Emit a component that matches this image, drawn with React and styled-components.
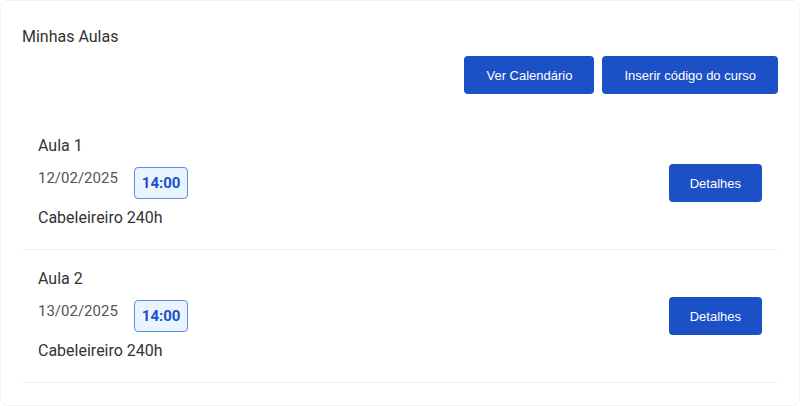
import styled, { createGlobalStyle } from 'styled-components';

const GlobalStyle = createGlobalStyle`
  html, body {
    margin: 0;
    padding: 0;
    background: #fff;
  }
  body {
    font-family: Roboto, "Liberation Sans", Arial, sans-serif;
    color: #333;
  }
`;

const Card = styled.section`
  box-sizing: border-box;
  width: 800px;
  height: 406px;
  padding: 25px 21px 0;
  background: #fff;
  border-radius: 8px;
  border: 1px solid #f3f3f3;
`;

const Title = styled.h2`
  margin: 0;
  font-size: 16px;
  font-weight: 400;
  line-height: 22px;
  color: #333;
`;

const Actions = styled.div`
  display: flex;
  justify-content: flex-end;
  gap: 8px;
  margin-top: 8px;
`;

const Button = styled.button`
  height: 38px;
  padding: 0 ${(p) => p.$pad || 22}px;
  border: none;
  border-radius: 4px;
  background: #1b50c7;
  color: #fff;
  font-family: "Liberation Sans", Arial, sans-serif;
  font-size: 13px;
  cursor: pointer;
`;

const DetailButton = styled(Button)`
  margin-top: 4px;
`;

const List = styled.ul`
  list-style: none;
  margin: 23px 0 0;
  padding: 0;
`;

const Item = styled.li`
  display: flex;
  align-items: center;
  justify-content: space-between;
  padding: 17px 16px 21px;
  border-bottom: 1px solid #eeeeee;
`;

const Info = styled.div`
  display: flex;
  flex-direction: column;
`;

const Name = styled.div`
  font-size: 16px;
  line-height: 24px;
  color: #333;
`;

const When = styled.div`
  display: flex;
  align-items: flex-start;
  gap: 16px;
  margin-top: 9px;
`;

const Date = styled.span`
  font-size: 15px;
  line-height: 22px;
  color: #555;
`;

const Time = styled.span`
  box-sizing: border-box;
  display: inline-flex;
  align-items: center;
  justify-content: center;
  height: 32px;
  padding: 0 7px;
  border: 1px solid #5b8ee6;
  border-radius: 4px;
  background: #e9f4ff;
  color: #1b50c7;
  font-size: 15px;
  font-weight: 700;
`;

const Course = styled.div`
  margin-top: 9px;
  font-size: 16px;
  line-height: 20px;
  color: #333;
`;

const aulas = [
  { nome: 'Aula 1', data: '12/02/2025', hora: '14:00', curso: 'Cabeleireiro 240h' },
  { nome: 'Aula 2', data: '13/02/2025', hora: '14:00', curso: 'Cabeleireiro 240h' },
];

function App() {
  return (
    <>
      <GlobalStyle />
      <Card>
        <Title>Minhas Aulas</Title>
        <Actions>
          <Button>Ver Calendário</Button>
          <Button>Inserir código do curso</Button>
        </Actions>
        <List>
          {aulas.map((aula) => (
            <Item key={aula.nome}>
              <Info>
                <Name>{aula.nome}</Name>
                <When>
                  <Date>{aula.data}</Date>
                  <Time>{aula.hora}</Time>
                </When>
                <Course>{aula.curso}</Course>
              </Info>
              <DetailButton $pad={21}>Detalhes</DetailButton>
            </Item>
          ))}
        </List>
      </Card>
    </>
  );
}

export default App;
